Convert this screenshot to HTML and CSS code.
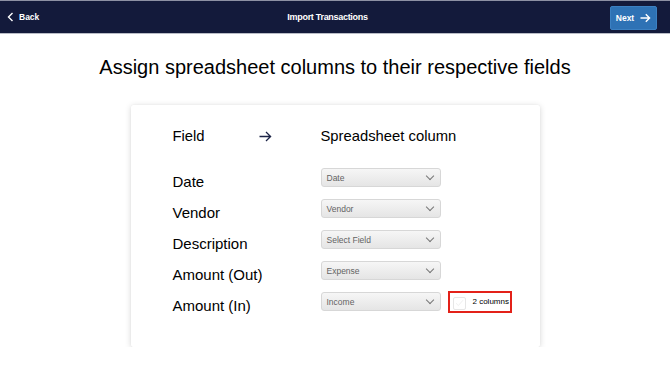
FILE: index.html
```html
<!DOCTYPE html>
<html lang="en">

<head>
  <meta charset="UTF-8">
  <meta name="viewport" content="width=device-width, initial-scale=1.0">
  <title>Import Transactions</title>
  <link rel="stylesheet" href="styles.css">
</head>

<body>
  <div class="topbar">
    <a class="back" href="#">
      <svg width="7" height="10" viewBox="0 0 7 10"><path d="M5.5 1 L1.5 5 L5.5 9" fill="none" stroke="#fff" stroke-width="1.4"/></svg>
      <span>Back</span>
    </a>
    <div class="title">Import Transactions</div>
    <button class="next" type="button">
      <span>Next</span>
      <svg width="11" height="10" viewBox="0 0 11 10"><path d="M0.5 5 H9.5 M5.8 1.2 L9.6 5 L5.8 8.8" fill="none" stroke="#fff" stroke-width="1.4"/></svg>
    </button>
  </div>

  <h1 class="heading">Assign spreadsheet columns to their respective fields</h1>

  <div class="card">
    <div class="head">
      <div class="head-field">
        <span>Field</span>
        <svg width="13" height="11" viewBox="0 0 13 11"><path d="M0.5 5.5 H11.5 M7 1 L11.6 5.5 L7 10" fill="none" stroke="#1c2447" stroke-width="1.3"/></svg>
      </div>
      <div>Spreadsheet column</div>
    </div>

    <div class="row">
      <div class="label">Date</div>
      <div class="select"><span>Date</span><i class="chev"></i></div>
    </div>
    <div class="row">
      <div class="label">Vendor</div>
      <div class="select"><span>Vendor</span><i class="chev"></i></div>
    </div>
    <div class="row">
      <div class="label">Description</div>
      <div class="select"><span>Select Field</span><i class="chev"></i></div>
    </div>
    <div class="row">
      <div class="label">Amount (Out)</div>
      <div class="select"><span>Expense</span><i class="chev"></i></div>
    </div>
    <div class="row">
      <div class="label">Amount (In)</div>
      <div class="select"><span>Income</span><i class="chev"></i></div>
      <label class="split">
        <span class="box">
          <svg width="9" height="8" viewBox="0 0 9 8"><path d="M1 4.2 L3.4 6.5 L8 1.2" fill="none" stroke="#f0f0f0" stroke-width="1"/></svg>
        </span>
        <span>2 columns</span>
      </label>
    </div>
  </div>
</body>

</html>
```

FILE: styles.css
```css
body {
  margin: 0px;
  font-family: 'Liberation Sans', Arial, sans-serif;
  color: #111;
  background: #fff;
}

.topbar {
  height: 32px;
  background: #131a3b;
  border-top: 1px solid #8d91a4;
  border-bottom: 1px solid #b9bcc6;
  display: grid;
  grid-template-columns: 1fr auto 1fr;
  align-items: center;
  padding: 0 13px 0 7px;
  color: #fff;
  font-size: 8.5px;
  font-weight: bold;
}

.back {
  display: flex;
  align-items: center;
  gap: 5px;
  color: #fff;
  text-decoration: none;
}

.title {
  font-size: 9px;
  letter-spacing: -0.3px;
  margin-right: 9px;
}

.next {
  justify-self: end;
  display: flex;
  align-items: center;
  justify-content: center;
  gap: 6px;
  width: 47px;
  height: 24px;
  padding: 0;
  margin-top: 1px;
  border: 1px solid #3b80c2;
  border-radius: 2px;
  background: #2e72b5;
  color: #fff;
  font-family: inherit;
  font-size: 8.5px;
  font-weight: bold;
}

.heading {
  margin: 22px 0 26px;
  font-size: 20px;
  line-height: 23px;
  font-weight: normal;
  text-align: center;
  color: #000;
}

.card {
  width: 409px;
  margin: 0 auto;
  box-sizing: border-box;
  padding: 21px 42px 30px;
  background: #fff;
  border-radius: 2px;
  box-shadow: 0 1px 6px rgba(0, 0, 0, .16), 0 0 1px rgba(0, 0, 0, .08);
}

.head {
  display: flex;
  font-size: 14.8px;
  line-height: 20px;
  color: #000;
  margin-bottom: 16px;
}

.head-field {
  width: 148px;
  flex-shrink: 0;
  display: flex;
  align-items: center;
  gap: 54px;
}

.row {
  height: 31px;
  display: flex;
  align-items: center;
}

.label {
  width: 148px;
  flex-shrink: 0;
  align-self: flex-start;
  padding-top: 11px;
  font-size: 15px;
  line-height: 17px;
  color: #000;
}

.select {
  width: 120px;
  height: 19px;
  flex-shrink: 0;
  box-sizing: border-box;
  display: flex;
  align-items: center;
  justify-content: space-between;
  padding: 0 7px 0 5px;
  border: 1px solid #d7d7d7;
  border-radius: 3px;
  background: linear-gradient(#f6f6f6, #e5e5e5);
  font-size: 8.5px;
  color: #636363;
}

.chev {
  width: 5px;
  height: 5px;
  border-right: 1px solid #777;
  border-bottom: 1px solid #777;
  transform: rotate(45deg);
  margin-top: -4px;
}

.split {
  flex-shrink: 0;
  margin-left: 7px;
  width: 64px;
  height: 22px;
  box-sizing: border-box;
  border: 2px solid #e32119;
  display: flex;
  align-items: center;
  gap: 7px;
  padding: 0 0 0 3px;
  font-size: 8px;
  white-space: nowrap;
  color: #000;
}

.box {
  width: 13px;
  height: 13px;
  flex-shrink: 0;
  box-sizing: border-box;
  border: 1px solid #e6e6e6;
  border-radius: 2px;
  display: flex;
  align-items: center;
  justify-content: center;
  margin-top: 3px;
}
```
